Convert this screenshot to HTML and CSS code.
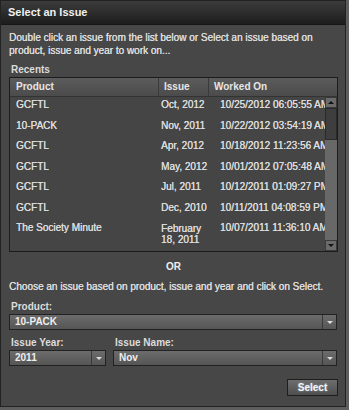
FILE: index.html
```html
<!DOCTYPE html>
<html lang="en">
<head>
  <meta charset="UTF-8" />
  <title>Select an Issue</title>
  <link rel="stylesheet" href="styles.css">
</head>
<body>
  <div class="dialog">
    <div class="title-bar">Select an Issue</div>

    <div class="content">
      <p class="intro">Double click an issue from the list below or Select an issue based on product, issue and year to work on...</p>

      <div class="label recents">Recents</div>
      <div class="grid">
        <div class="grid-head">
          <div class="col col-product">Product</div>
          <div class="col col-issue">Issue</div>
          <div class="col col-worked">Worked On</div>
        </div>
        <div class="grid-body">
          <div class="rows">
            <div class="row"><div class="col col-product">GCFTL</div><div class="col col-issue">Oct, 2012</div><div class="col col-worked">10/25/2012 06:05:55 AM</div></div>
            <div class="row"><div class="col col-product">10-PACK</div><div class="col col-issue">Nov, 2011</div><div class="col col-worked">10/22/2012 03:54:19 AM</div></div>
            <div class="row"><div class="col col-product">GCFTL</div><div class="col col-issue">Apr, 2012</div><div class="col col-worked">10/18/2012 11:23:56 AM</div></div>
            <div class="row"><div class="col col-product">GCFTL</div><div class="col col-issue">May, 2012</div><div class="col col-worked">10/01/2012 07:05:48 AM</div></div>
            <div class="row"><div class="col col-product">GCFTL</div><div class="col col-issue">Jul, 2011</div><div class="col col-worked">10/12/2011 01:09:27 PM</div></div>
            <div class="row"><div class="col col-product">GCFTL</div><div class="col col-issue">Dec, 2010</div><div class="col col-worked">10/11/2011 04:08:59 PM</div></div>
            <div class="row tall"><div class="col col-product">The Society Minute</div><div class="col col-issue">February 18, 2011</div><div class="col col-worked">10/07/2011 11:36:10 AM</div></div>
          </div>
          <div class="scrollbar">
            <div class="scroll-btn up"></div>
            <div class="scroll-thumb"></div>
            <div class="scroll-track"></div>
            <div class="scroll-btn down"></div>
          </div>
        </div>
      </div>

      <div class="or">OR</div>
      <p class="intro choose">Choose an issue based on product, issue and year and click on Select.</p>

      <div class="label product-label">Product:</div>
      <div class="combo"><span class="combo-text">10-PACK</span><span class="combo-arrow"></span></div>

      <div class="field-row">
        <div class="field year">
          <div class="label">Issue Year:</div>
          <div class="combo"><span class="combo-text">2011</span><span class="combo-arrow"></span></div>
        </div>
        <div class="field name">
          <div class="label">Issue Name:</div>
          <div class="combo"><span class="combo-text">Nov</span><span class="combo-arrow"></span></div>
        </div>
      </div>

      <div class="actions">
        <button class="btn">Select</button>
      </div>
    </div>
  </div>
</body>
</html>
```

FILE: styles.css
```css
body {
  margin: 0;
  background-color: #5e5e5e;
  font-family: 'Liberation Sans', Arial, sans-serif;
  font-size: 10px;
  font-weight: bold;
  color: #dcdcdc;
}

/* Dialog frame */
.dialog {
  width: 344px;
  height: 405px;
  background-color: #474747;
  border: 1px solid #222;
  display: flex;
  flex-direction: column;
}

.title-bar {
  height: 23px;
  line-height: 23px;
  padding-left: 7px;
  background: linear-gradient(#3c3c3c, #1d1d1d);
  border-bottom: 1px solid #161616;
  color: #f0f0f0;
  font-size: 11px;
}

.content {
  padding: 6px 7px 0 8px;
  display: flex;
  flex-direction: column;
}

.intro {
  margin: 0;
  line-height: 13px;
  font-weight: normal;
  text-shadow: 0.3px 0 0 #dcdcdc;
}

.label {
  height: 13px;
  line-height: 13px;
  padding-left: 2px;
}

.recents {
  margin-top: 6px;
}

/* Recents grid */
.grid {
  margin-top: 1px;
  border: 1px solid #1c1c1c;
  background-color: #454545;
  width: 327px;
}

.grid-head {
  display: flex;
  height: 18px;
  line-height: 18px;
  background: linear-gradient(#5c5c5c, #4b4b4b);
  border-bottom: 1px solid #333;
  color: #e6e6e6;
}

.grid-head .col-product,
.grid-head .col-issue {
  border-right: 1px solid #3a3a3a;
}

.col-product {
  width: 142px;
  padding-left: 6px;
}

.col-issue {
  width: 44px;
  padding-left: 5px;
}

.col-worked {
  flex: 1;
  padding-left: 5px;
  white-space: nowrap;
  overflow: hidden;
}

.grid-body {
  display: flex;
  height: 154px;
}

.rows {
  flex: 1;
  overflow: hidden;
  font-weight: normal;
  text-shadow: 0.3px 0 0 #dcdcdc;
}

.row {
  display: flex;
  height: 20.5px;
  line-height: 16px;
}

.row .col-issue {
  width: 50px;
  padding-left: 3px;
}

.row .col-worked {
  padding-left: 9px;
}

.row.tall {
  height: 32px;
}

.row.tall .col-issue {
  line-height: 11px;
  padding-top: 3px;
}

.scrollbar {
  width: 12px;
  display: flex;
  flex-direction: column;
  background-color: #686868;
}

.scroll-btn {
  height: 11px;
  background-color: #6b6b6b;
  border: 1px solid #3a3a3a;
  box-sizing: border-box;
  position: relative;
}

.scroll-btn::after {
  content: '';
  position: absolute;
  left: 2px;
  top: 3px;
  border-left: 3px solid transparent;
  border-right: 3px solid transparent;
}

.scroll-btn.up::after {
  border-bottom: 3px solid #111;
}

.scroll-btn.down::after {
  border-top: 3px solid #111;
}

.scroll-thumb {
  height: 32px;
  background-color: #3e3e3e;
  border: 1px solid #2a2a2a;
  box-sizing: border-box;
}

.scroll-track {
  flex: 1;
}

.or {
  margin-top: 8px;
  text-align: center;
  height: 13px;
  line-height: 13px;
  color: #eee;
}

.intro.choose {
  margin-top: 7px;
}

.product-label {
  margin-top: 7px;
}

/* Combo boxes */
.combo {
  margin-top: 1px;
  height: 16px;
  display: flex;
  border: 1px solid #222;
  background: linear-gradient(#6c6c6c, #555);
  box-sizing: border-box;
  width: 328px;
}

.combo-text {
  flex: 1;
  line-height: 14px;
  padding-left: 5px;
  color: #eee;
}

.combo-arrow {
  width: 13px;
  border-left: 1px solid #3a3a3a;
  position: relative;
}

.combo-arrow::after {
  content: '';
  position: absolute;
  left: 4px;
  top: 6px;
  border-left: 3px solid transparent;
  border-right: 3px solid transparent;
  border-top: 3px solid #ddd;
}

.field-row {
  display: flex;
  gap: 7px;
  margin-top: 6px;
}

.field.year .combo {
  width: 97px;
}

.field.name .combo {
  width: 224px;
}

.actions {
  display: flex;
  justify-content: flex-end;
  margin-top: 13px;
}

.btn {
  width: 51px;
  height: 17px;
  padding: 0;
  border: 1px solid #1e1e1e;
  background: linear-gradient(#6e6e6e, #4e4e4e);
  color: #f4f4f4;
  font-family: 'Liberation Sans', Arial, sans-serif;
  font-size: 10px;
  font-weight: bold;
  text-shadow: 0 0 2px #9ab;
}
```
